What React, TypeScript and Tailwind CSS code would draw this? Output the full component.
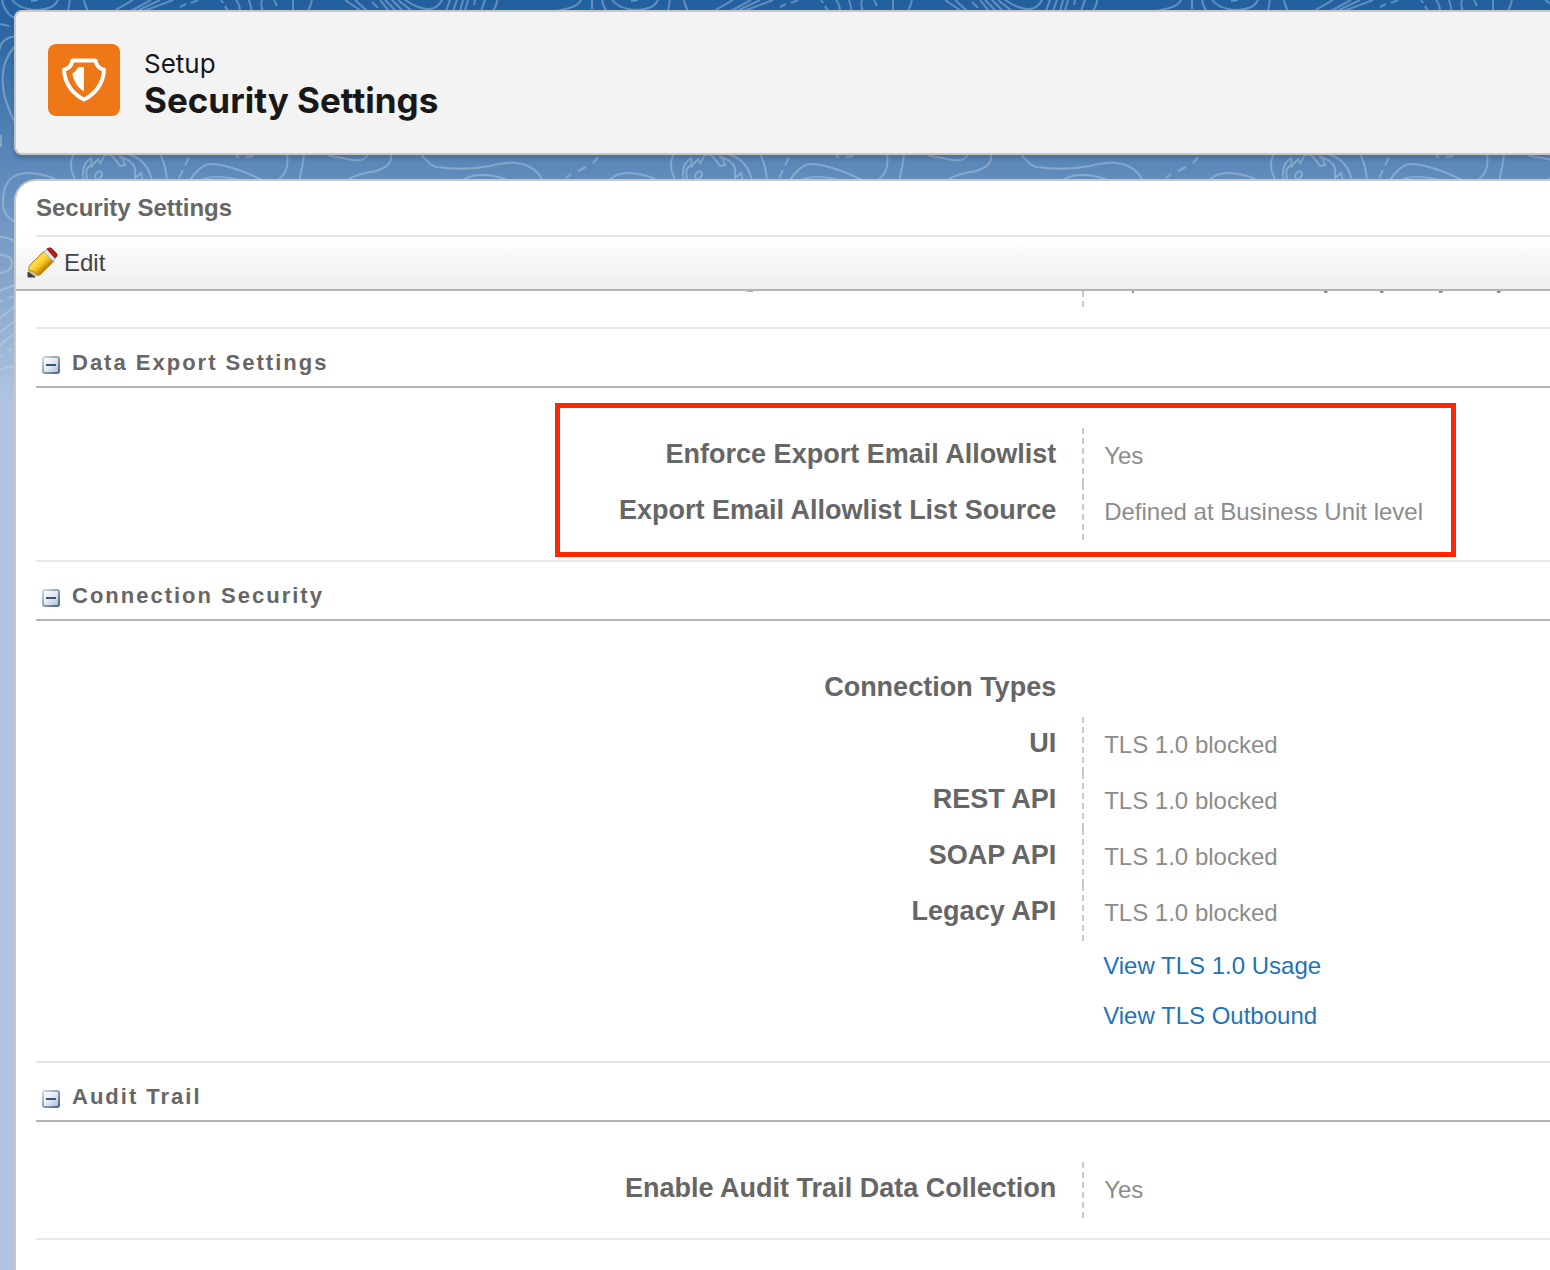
type Row = { label: string; value?: string };

type Section = {
  title: string;
  rows: Row[];
  links?: string[];
  highlighted?: boolean;
};

const sections: Section[] = [
  {
    title: "Data Export Settings",
    highlighted: true,
    rows: [
      { label: "Enforce Export Email Allowlist", value: "Yes" },
      { label: "Export Email Allowlist List Source", value: "Defined at Business Unit level" },
    ],
  },
  {
    title: "Connection Security",
    rows: [
      { label: "Connection Types" },
      { label: "UI", value: "TLS 1.0 blocked" },
      { label: "REST API", value: "TLS 1.0 blocked" },
      { label: "SOAP API", value: "TLS 1.0 blocked" },
      { label: "Legacy API", value: "TLS 1.0 blocked" },
    ],
    links: ["View TLS 1.0 Usage", "View TLS Outbound"],
  },
  {
    title: "Audit Trail",
    rows: [{ label: "Enable Audit Trail Data Collection", value: "Yes" }],
  },
];

// Contour lines, repeated every 600px across the page
const contours = [
  // top edge
  "M2 0Q4 12 14 18 M12 0Q20 10 38 10Q54 9 58 0 M31 1L38 0 M70 0L68 11 M84 0Q85 6 88 11",
  "M133 0L114 11 M151 0L131 11 M160 0L137 11 M173 0L144 11 M198 0L191 3 M186 4L180 7",
  "M221 0L223 3 M225 6L228 11 M236 0Q240 5 240 11 M249 0L252 11 M262 0Q260 5 263 11",
  "M274 0L277 6 M293 0V11 M312 0Q311 5 308 11 M345 0L361 11 M355 0L367 11 M372 2L378 8",
  "M380 0L389 11 M385 0L396 11 M392 0L403 11 M398 0L412 11 M405 0Q420 10 430 9Q438 8 442 0",
  "M450 0L446 11 M457 0L453 11 M463 0L460 11 M468 0L465 11 M475 0L474 5 M485 0L481 11",
  "M497 0Q497 5 493 11 M581 0Q578 8 555 11 M592 0V9",
  // band between the header and the panel
  "M74 154Q67 165 76 181 M84 181Q80 165 91 158L92 166L98 159L100 163L105 155H111Q117 161 120 166L125 165Q124 159 119 156Q132 160 135 168L135 178L141 173L143 181",
  "M88 181Q83 168 92 165 M102 172Q96 170 95 176Q95 180 99 179Q103 176 102 172 M128 154Q148 160 152 181 M160 154Q166 165 167 181",
  "M189 158L185 165 M183 170L179 178 M190 180Q200 165 210 164Q230 164 264 181 M200 180Q215 174 240 180",
  "M236 156L239 157 M246 157L253 156 M287 154Q290 172 277 181 M304 154Q303 165 299 181",
  "M328 155Q336 158 343 158Q355 161 361 160Q366 159 368 154 M391 154Q393 166 376 171Q355 174 346 181",
  "M421 154Q428 164 436 167Q465 171 490 166Q530 155 543 181 M462 180Q480 170 508 180",
  "M566 178L571 174 M578 171L586 167 M593 163L598 157",
  // left edge
  "M0 24L9 26 M16 36Q0 38 -1 52 M14 47Q-9 75 14 121 M1 135V147 M15 222Q2 215 3 202Q3 173 28 173Q42 173 57 180",
  "M-1 237Q8 237 15 241 M-1 255Q12 255 12 263Q12 272 -1 273 M-1 291L15 285 M-1 302L3 300 M8 298L15 296",
  "M-1 319L15 306 M-1 333L15 321 M-1 346L15 333 M-1 357L4 355 M9 351L12 348 M-1 370Q7 366 15 367",
];

function Backdrop() {
  return (
    <svg className="absolute inset-x-0 top-0 -z-10 h-[400px] w-full" aria-hidden="true">
      <defs>
        <pattern id="contours" width="600" height="400" patternUnits="userSpaceOnUse">
          <path d={contours.join(" ")} fill="none" stroke="#c9daee" strokeOpacity="0.38" strokeWidth="2" />
        </pattern>
      </defs>
      <rect width="100%" height="400" fill="url(#contours)" />
    </svg>
  );
}

function ShieldIcon() {
  return (
    <span className="flex size-[72px] items-center justify-center rounded-lg bg-[#ee7717]">
      <svg width="72" height="72" viewBox="0 0 72 72" fill="none" aria-hidden="true">
        <path
          d="M24.5 16.5H47.5C48.5 22 51.5 24.8 56 25.8C55.5 40 46.5 50.5 36 55.5C25.5 50.5 16.5 40 16 25.8C20.5 24.8 23.5 22 24.5 16.5Z"
          stroke="#fff"
          strokeWidth="4"
          strokeLinejoin="round"
        />
        <path d="M36 23V47.5C29 43 25.5 36.5 24.3 29.5C27 28 28.5 26 29.5 24Q30 23 31 23Z" fill="#fff" />
      </svg>
    </span>
  );
}

function PencilIcon() {
  return (
    <svg width="32" height="32" viewBox="0 0 32 32" aria-hidden="true">
      <defs>
        <linearGradient id="pencilBody" x1="6" y1="11" x2="16" y2="22" gradientUnits="userSpaceOnUse">
          <stop offset="0" stopColor="#e9a81c" />
          <stop offset="0.35" stopColor="#ffe04a" />
          <stop offset="0.7" stopColor="#f7c41f" />
          <stop offset="1" stopColor="#c98a12" />
        </linearGradient>
      </defs>
      <path d="M1 30L2 20L12 28L8 30Z" fill="#dcc08c" />
      <path d="M1 25L8 30H1Z" fill="#3b4046" stroke="#3b4046" />
      <path d="M2 20Q2 18 4 17L17 4L27 14L14 27Q12 29 10 28L7 25Q5 23 2 24Z" fill="url(#pencilBody)" stroke="#b58420" />
      <path d="M17 5L20 2L29 11L26 14Z" fill="#e2e2e2" stroke="#b5b5b5" />
      <path d="M20 2L22 1H24L30 7V9L28 11Z" fill="#bd1c14" stroke="#9a1812" />
    </svg>
  );
}

function CollapseIcon() {
  return (
    <svg width="20" height="20" viewBox="0 0 20 20" aria-hidden="true">
      <defs>
        <linearGradient id="collapseFace" x1="0" y1="0" x2="1" y2="1">
          <stop offset="0" stopColor="#ffffff" />
          <stop offset="0.5" stopColor="#e3e9f2" />
          <stop offset="1" stopColor="#a9b9cf" />
        </linearGradient>
        <linearGradient id="collapseEdge" x1="0" y1="0" x2="1" y2="1">
          <stop offset="0" stopColor="#d0d9e6" />
          <stop offset="1" stopColor="#4a6485" />
        </linearGradient>
      </defs>
      <rect x="2" y="2" width="16" height="16" rx="2" fill="url(#collapseFace)" stroke="url(#collapseEdge)" strokeWidth="2" />
      <rect x="5" y="9" width="10" height="2" fill="#3c5575" />
    </svg>
  );
}

function SettingRow({ label, value }: Row) {
  return (
    <tr className="h-14">
      <th scope="row" className="pr-[26px] pb-1 text-right text-[27px] leading-8 font-bold text-[#666]">
        {label}
      </th>
      <td
        className={
          value
            ? "border-l-2 border-dashed border-[#c9c9c9] pl-5 text-2xl leading-8 text-[#8c8c8c]"
            : "pl-5"
        }
      >
        {value}
      </td>
    </tr>
  );
}

function SettingsSection({ title, rows, links, highlighted }: Section) {
  return (
    <section className="border-t-2 border-[#e6e6e6]">
      <h3 className="flex h-[59px] items-center border-b-2 border-[#b5b5b5] pt-[14px] text-[22px] leading-7 font-bold tracking-[2px] text-[#666]">
        <button type="button" className="flex items-center gap-[11px] pl-[5px]" aria-expanded="true">
          <CollapseIcon />
          <span className="pb-[3px]">{title}</span>
        </button>
      </h3>

      <div className="relative pt-10 pb-5">
        {highlighted && (
          <div className="pointer-events-none absolute top-[15px] right-[94px] bottom-[3px] left-[519px] border-[5px] border-[#ff2604]" />
        )}
        <table className="w-full table-fixed border-separate border-spacing-0">
          <colgroup>
            <col className="w-[69.1%]" />
            <col />
          </colgroup>
          <tbody>
            {rows.map((row) => (
              <SettingRow key={row.label} {...row} />
            ))}
            {links?.map((link) => (
              <tr key={link} className="h-[50px]">
                <td />
                <td className="pl-[21px] text-2xl leading-8">
                  <a href="#" className="text-[#1f73b7] hover:underline">
                    {link}
                  </a>
                </td>
              </tr>
            ))}
          </tbody>
        </table>
      </div>
    </section>
  );
}

export default function App() {
  return (
    <div className="relative isolate flex min-h-screen flex-col overflow-hidden bg-[#b0c4df] bg-[linear-gradient(#215f9f_0px,#b0c4df_400px)] pt-[10px] pl-[14px] font-['Liberation_Sans',Arial,sans-serif]">
      <Backdrop />

      <header className="flex h-[145px] items-center gap-6 rounded-l-lg border-2 border-r-0 border-[#c9c7c5] bg-[#f3f3f3] pb-[6px] pl-8 font-[Inter,sans-serif] text-[#181818] shadow-[0_4px_4px_rgba(0,0,0,0.15)]">
        <ShieldIcon />
        <div className="pt-2">
          <p className="text-[26px] leading-8">Setup</p>
          <h1 className="text-[35px] leading-10 font-bold">Security Settings</h1>
        </div>
      </header>

      <main className="mt-6 flex-1 rounded-tl-[22px] border-t-2 border-l-2 border-[#c9c7c5] bg-white">
        <h2 className="ml-5 border-b-2 border-[#e6e6e6] pt-[11px] pb-[11px] text-2xl leading-8 font-bold text-[#666]">
          Security Settings
        </h2>
        <div className="flex h-[54px] items-center border-b-2 border-[#b5b5b5] bg-linear-to-b from-white to-[#eee] pl-[11px]">
          <button type="button" className="flex items-center gap-[5px] text-2xl leading-8 text-[#444]">
            <PencilIcon />
            Edit
          </button>
        </div>

        <div className="pl-5">
          {/* tail of the row scrolled under the toolbar */}
          <div className="flex h-9">
            <div className="flex w-[69.1%] justify-end">
              <svg width="340" height="2" aria-hidden="true">
                <path d="M5 0h6v1h-6z" fill="#aaa" />
              </svg>
            </div>
            <div className="h-4 border-l-2 border-dashed border-[#c9c9c9]">
              <svg width="420" height="3" aria-hidden="true">
                <path d="M48 0h2v2h-2z M240 0h4l-1 2h-3z M296 0h4l-1 2h-3z M355 0h4l-1 2h-3z M413 0h4l-1 2h-3z" fill="#8c8c8c" />
              </svg>
            </div>
          </div>
          {sections.map((section) => (
            <SettingsSection key={section.title} {...section} />
          ))}
          <hr className="border-t-2 border-[#e6e6e6]" />
        </div>
      </main>
    </div>
  );
}
